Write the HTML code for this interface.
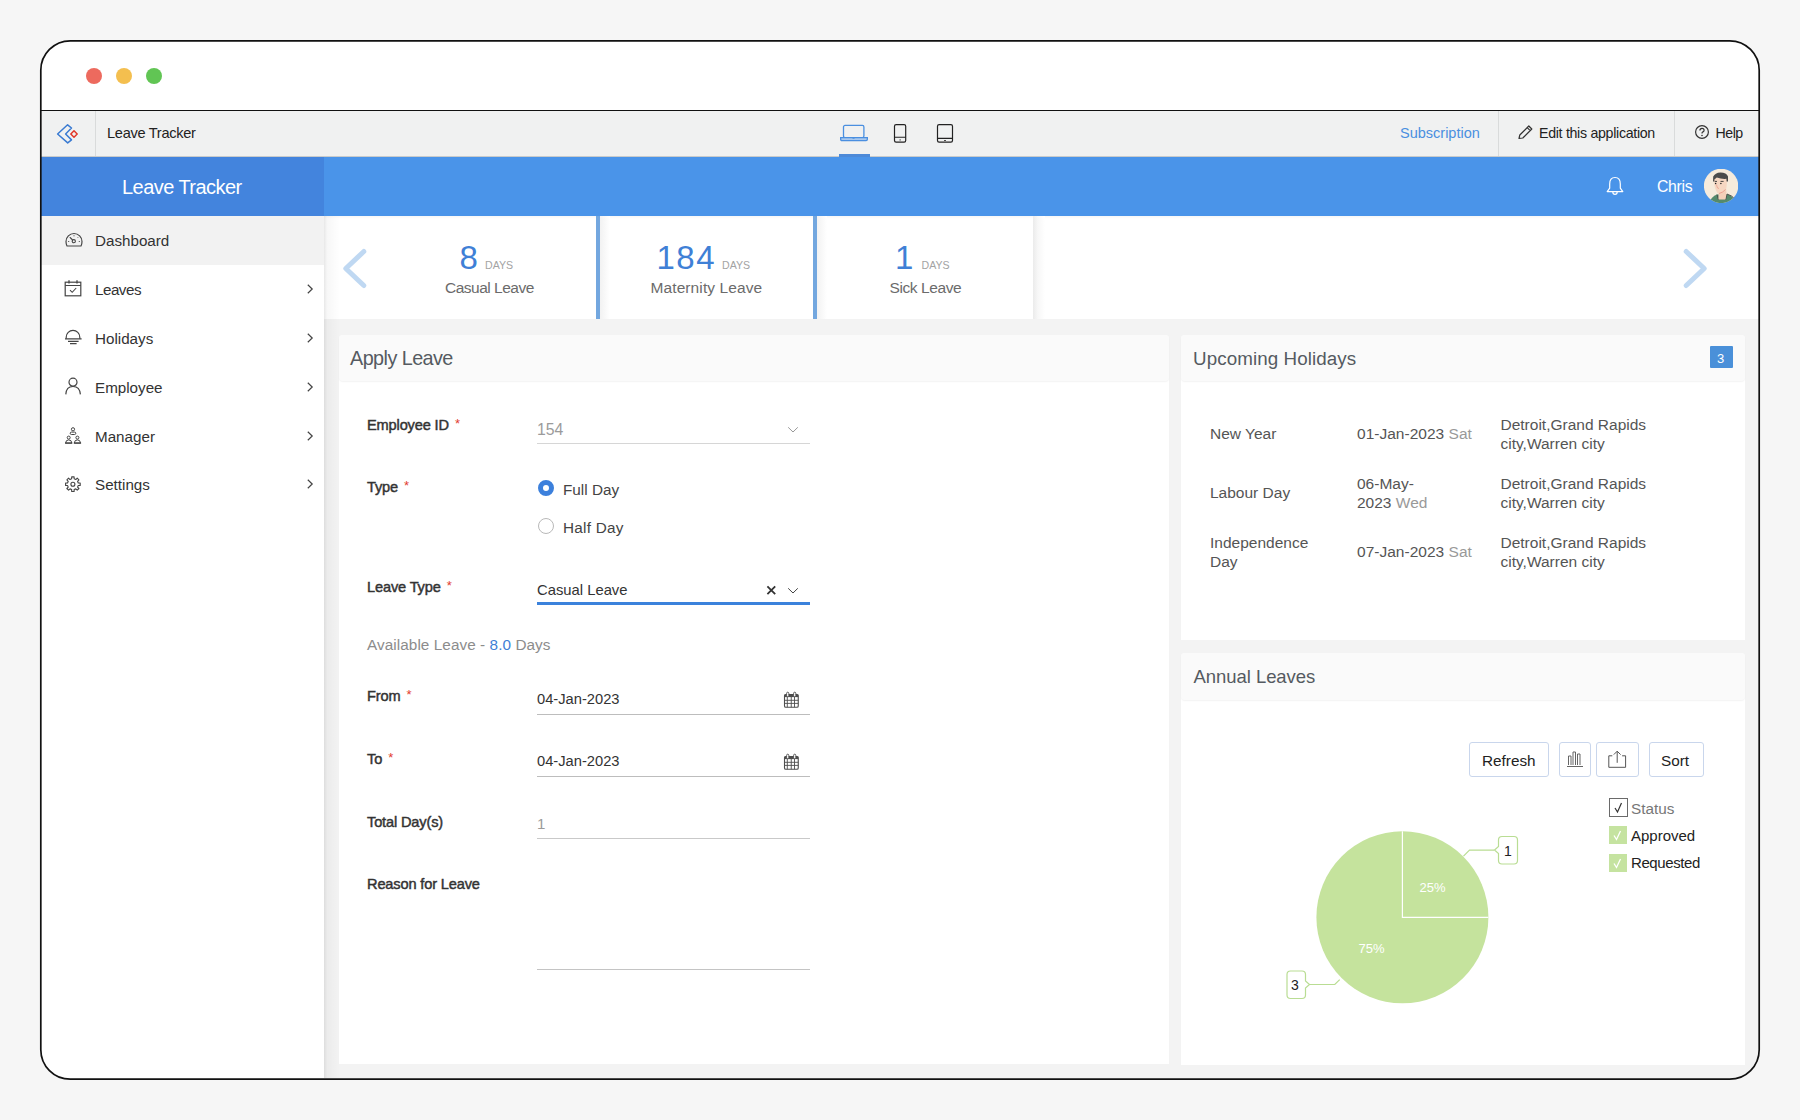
<!DOCTYPE html>
<html><head><meta charset="utf-8">
<style>
*{box-sizing:border-box;margin:0;padding:0}
html,body{width:1800px;height:1120px;overflow:hidden;background:#f6f6f6;font-family:"Liberation Sans",sans-serif;}
.abs{position:absolute}
.t{position:absolute;white-space:nowrap;line-height:1}
#clip{position:absolute;left:0;top:0;width:1800px;height:1120px;clip-path:inset(40px 40px 40px 40px round 30px);background:#fff}
#border{position:absolute;left:40px;top:40px;width:1720px;height:1040px;border:2px solid #111;border-radius:30px;pointer-events:none}
#tbline{position:absolute;left:40px;top:109.6px;width:1720px;height:1.6px;background:#111}
</style></head><body>
<div id="clip">
<div class="abs" style="left:86px;top:68px;width:16px;height:16px;border-radius:50%;background:#ed6a5e"></div>
<div class="abs" style="left:116px;top:68px;width:16px;height:16px;border-radius:50%;background:#f4bf4f"></div>
<div class="abs" style="left:146px;top:68px;width:16px;height:16px;border-radius:50%;background:#61c554"></div>
<div class="abs" style="left:41px;top:111px;width:1718px;height:46px;background:#f0f1f1"></div>
<div class="abs" style="left:95px;top:111px;width:1px;height:46px;background:#d9dbdb"></div>
<div class="abs" style="left:1498px;top:111px;width:1px;height:46px;background:#d9dbdb"></div>
<div class="abs" style="left:1674px;top:111px;width:1px;height:46px;background:#d9dbdb"></div>
<svg class="abs" style="left:56px;top:123px;" width="24" height="22" viewBox="0 0 24 22"><path d="M11.6 1.8 L1.6 11 L11.7 19.9 L15.5 16.9 L9.6 11 L15.5 5 Z" fill="none" stroke="#3a7bd2" stroke-width="1.5" stroke-linejoin="round"/><path d="M18 7.8 L21.2 11 L18 14.2 L14.8 11 Z" fill="none" stroke="#e2382a" stroke-width="1.5" stroke-linejoin="round"/></svg>
<div class="t" style="left:107px;top:125.94px;font-size:14.6px;color:#222;font-weight:400;letter-spacing:-0.3px;">Leave Tracker</div>
<svg class="abs" style="left:839px;top:123px;" width="32" height="20" viewBox="0 0 32 20"><rect x="4.5" y="2.45" width="20.4" height="12.1" rx="1.5" fill="none" stroke="#4a8fe0" stroke-width="1.3"/><path d="M1.65 14.55 H28.35 V16.3 Q28.35 17.55 27.1 17.55 H2.9 Q1.65 17.55 1.65 16.3 Z" fill="#a9c8ee" stroke="#4a8fe0" stroke-width="1.3"/><path d="M13.5 15.2 H15.5" stroke="#4a8fe0" stroke-width="1"/></svg>
<div class="abs" style="left:839px;top:154px;width:31px;height:3px;background:#4d8ad8"></div>
<svg class="abs" style="left:892px;top:122px;" width="16" height="22" viewBox="0 0 16 22"><rect x="2.5" y="2.6" width="11.2" height="17.6" rx="1.6" fill="none" stroke="#222" stroke-width="1.2"/><path d="M2.5 15.3 H13.7" stroke="#222" stroke-width="1.1"/><circle cx="8.1" cy="17.9" r="0.6" fill="#222"/></svg>
<svg class="abs" style="left:936px;top:122px;" width="18" height="22" viewBox="0 0 18 22"><rect x="1.5" y="2.6" width="15" height="17.6" rx="1.6" fill="none" stroke="#222" stroke-width="1.2"/><path d="M1.5 16.4 H16.5" stroke="#222" stroke-width="1.1"/><rect x="8" y="18.2" width="2" height="0.8" fill="#222"/></svg>
<div class="t" style="left:1400px;top:126.03px;font-size:14.5px;color:#4a8fe0;font-weight:400;">Subscription</div>
<svg class="abs" style="left:1516px;top:124px;" width="18" height="16" viewBox="0 0 18 16"><path d="M3 14.5 L3.8 11 L12.8 2 L15.8 5 L6.8 14 Z M11.2 3.6 L14.2 6.6" fill="none" stroke="#333" stroke-width="1.2" stroke-linejoin="round"/></svg>
<div class="t" style="left:1539px;top:126.28px;font-size:14.2px;color:#222;font-weight:400;letter-spacing:-0.3px;">Edit this application</div>
<svg class="abs" style="left:1694px;top:124px;" width="16" height="16" viewBox="0 0 16 16"><circle cx="8" cy="8" r="6.4" fill="none" stroke="#333" stroke-width="1.2"/><path d="M5.9 6.4 Q5.9 4.3 8 4.3 Q10.1 4.3 10.1 6.2 Q10.1 7.4 8.6 8.1 Q8 8.5 8 9.5" fill="none" stroke="#333" stroke-width="1.2"/><circle cx="8" cy="11.5" r="0.8" fill="#333"/></svg>
<div class="t" style="left:1715.5px;top:126.28px;font-size:14.2px;color:#222;font-weight:400;letter-spacing:-0.5px;">Help</div>
<div class="abs" style="left:41px;top:157px;width:1718px;height:59px;background:#4a94e9"></div>
<div class="abs" style="left:41px;top:157px;width:283px;height:59px;background:#4384dd"></div>
<div class="abs" style="left:41px;top:156px;width:1718px;height:1px;background:#c9cbcb"></div>
<div class="abs" style="left:839px;top:154px;width:31px;height:2.6px;background:#4d8ad8"></div>
<div class="t" style="left:122px;top:177.27px;font-size:20px;color:#fff;font-weight:400;letter-spacing:-0.55px;">Leave Tracker</div>
<svg class="abs" style="left:1605px;top:175px;" width="20" height="21" viewBox="0 0 20 21"><path d="M10 2.5 Q15.3 2.5 15.3 9 V13.2 L17.8 16.6 H2.2 L4.7 13.2 V9 Q4.7 2.5 10 2.5 Z" fill="none" stroke="#fff" stroke-width="1.2" stroke-linejoin="round"/><path d="M7.8 16.8 Q7.8 19.4 10 19.4 Q12.2 19.4 12.2 16.8" fill="none" stroke="#fff" stroke-width="1.2"/></svg>
<div class="t" style="left:1657px;top:178.83px;font-size:15.8px;color:#fff;font-weight:400;letter-spacing:-0.3px;">Chris</div>
<svg class="abs" style="left:1704px;top:169px;" width="34" height="34" viewBox="0 0 34 34"><defs><clipPath id="av"><circle cx="17.1" cy="16.9" r="17.2"/></clipPath></defs><circle cx="17.1" cy="16.9" r="17.2" fill="#f6ebdc"/><g clip-path="url(#av)"><path d="M4 37 Q6 28 13 25.5 L23 25 Q29 27 32 33 L32 37 Z" fill="#548a6c"/><path d="M13 25.5 L14.5 31 M23 25 L21.5 31 M23 25 Q28 26.5 31 30" fill="none" stroke="#4a4a4a" stroke-width="0.9"/><path d="M14.5 21 L14.5 30.5 L21.5 30.5 L22.5 25 L22 18 Z" fill="#f3cfb8"/><path d="M10 11 Q10 8.8 13 8.6 L21 8.6 Q23.2 9 23 12.5 L22.5 18.5 Q22 21.3 19.5 22.8 L15.5 24.8 Q12.8 24.3 12 21.5 L10.5 17 Z" fill="#f6d7c2"/><path d="M15 24.5 Q19 23.5 21.5 20.5" fill="none" stroke="#e89a8a" stroke-width="0.9"/><path d="M9 12.6 L9.2 7.6 Q11 3.6 16.5 3.4 Q22.5 3.4 24 7.5 L24 12.6 L22.6 12.6 L22.4 9.8 Q17.5 10.2 12.8 8.6 L10.4 10.4 L10.4 12.6 Z" fill="#4b4b4b"/><path d="M10.8 12.4 H13 M16.5 12.4 H19.6" stroke="#333" stroke-width="0.9"/><circle cx="11.6" cy="14.6" r="0.75" fill="#222"/><circle cx="16.9" cy="14.6" r="0.75" fill="#222"/><path d="M12.4 15.5 L13.5 19 L15 19.5" fill="none" stroke="#eaa08e" stroke-width="0.8"/></g></svg>
<div class="abs" style="left:41px;top:216px;width:283px;height:49px;background:#f2f2f2"></div>
<div class="t" style="left:95px;top:232.93px;font-size:15.2px;color:#333;font-weight:400;">Dashboard</div>
<div class="t" style="left:95px;top:282.13px;font-size:15.2px;color:#333;font-weight:400;letter-spacing:-0.5px;">Leaves</div>
<svg class="abs" style="left:305px;top:283px;" width="10" height="12" viewBox="0 0 10 12"><path d="M2.8 1.8 L7.2 6 L2.8 10.2" fill="none" stroke="#444" stroke-width="1.2"/></svg>
<div class="t" style="left:95px;top:331.13px;font-size:15.2px;color:#333;font-weight:400;">Holidays</div>
<svg class="abs" style="left:305px;top:332px;" width="10" height="12" viewBox="0 0 10 12"><path d="M2.8 1.8 L7.2 6 L2.8 10.2" fill="none" stroke="#444" stroke-width="1.2"/></svg>
<div class="t" style="left:95px;top:379.93px;font-size:15.2px;color:#333;font-weight:400;">Employee</div>
<svg class="abs" style="left:305px;top:380.8px;" width="10" height="12" viewBox="0 0 10 12"><path d="M2.8 1.8 L7.2 6 L2.8 10.2" fill="none" stroke="#444" stroke-width="1.2"/></svg>
<div class="t" style="left:95px;top:428.63px;font-size:15.2px;color:#333;font-weight:400;">Manager</div>
<svg class="abs" style="left:305px;top:429.5px;" width="10" height="12" viewBox="0 0 10 12"><path d="M2.8 1.8 L7.2 6 L2.8 10.2" fill="none" stroke="#444" stroke-width="1.2"/></svg>
<div class="t" style="left:95px;top:477.33px;font-size:15.2px;color:#333;font-weight:400;">Settings</div>
<svg class="abs" style="left:305px;top:478.2px;" width="10" height="12" viewBox="0 0 10 12"><path d="M2.8 1.8 L7.2 6 L2.8 10.2" fill="none" stroke="#444" stroke-width="1.2"/></svg>
<svg class="abs" style="left:64.5px;top:231.5px;" width="18" height="16" viewBox="0 0 18 16"><path d="M2 14 Q1 12 1 9.5 A8 8 0 0 1 17 9.5 Q17 12 16 14 Z" fill="none" stroke="#444" stroke-width="1.2" stroke-linejoin="round"/><circle cx="8.8" cy="9.2" r="1.6" fill="none" stroke="#444" stroke-width="1.1"/><path d="M7.6 8 L5 5.3" stroke="#444" stroke-width="1.1"/><path d="M3.2 9.5 H4.2 M13.8 9.5 H14.8 M9 3.3 V4.3 M4.6 5 L5.2 5.6 M13.4 5 L12.8 5.6" stroke="#444" stroke-width="1"/></svg>
<svg class="abs" style="left:64px;top:279px;" width="18" height="18" viewBox="0 0 18 18"><rect x="1.2" y="3.2" width="15.6" height="13.6" fill="none" stroke="#444" stroke-width="1.2"/><path d="M1.2 6.5 H16.8" stroke="#444" stroke-width="1"/><path d="M5 1.2 V4.5 M13 1.2 V4.5" stroke="#444" stroke-width="1.3"/><path d="M6 11.2 L8.2 13.3 L12.2 9" fill="none" stroke="#444" stroke-width="1.1"/></svg>
<svg class="abs" style="left:64px;top:329px;" width="19" height="17" viewBox="0 0 19 17"><path d="M2.2 9.7 V8.2 A6.8 6.8 0 0 1 15.8 8.2 V9.7" fill="none" stroke="#444" stroke-width="1.2"/><path d="M1 9.8 H17.6 M4 12.4 H14.6 M6 14.6 H12.6" stroke="#444" stroke-width="1.3"/></svg>
<svg class="abs" style="left:64px;top:376px;" width="18" height="20" viewBox="0 0 18 20"><circle cx="9" cy="6.2" r="4" fill="none" stroke="#444" stroke-width="1.2"/><path d="M1.8 18.4 Q2.2 10.5 9 10.5 Q15.8 10.5 16.4 18.4" fill="none" stroke="#444" stroke-width="1.2"/></svg>
<svg class="abs" style="left:64px;top:425px;" width="18" height="20" viewBox="0 0 18 20"><circle cx="9" cy="4.3" r="1.6" fill="none" stroke="#444" stroke-width="1"/><rect x="6.2" y="7.1" width="5.6" height="2.4" rx="1.2" fill="none" stroke="#444" stroke-width="1"/><circle cx="4.7" cy="12.6" r="1.5" fill="none" stroke="#444" stroke-width="1"/><circle cx="13.4" cy="12.6" r="1.5" fill="none" stroke="#444" stroke-width="1"/><path d="M1.6 18 Q1.8 14.9 4.7 14.9 Q7.6 14.9 7.8 18 Z M10.3 18 Q10.5 14.9 13.4 14.9 Q16.3 14.9 16.5 18 Z" fill="none" stroke="#444" stroke-width="1"/><path d="M1 18.2 H8.3 M9.8 18.2 H17.1" stroke="#444" stroke-width="1.3"/></svg>
<svg class="abs" style="left:63px;top:475px;" width="20" height="19" viewBox="0 0 20 19"><path d="M15.26 7.96 L17.20 7.99 L17.20 10.41 L15.26 10.44 L14.57 12.11 L15.92 13.50 L14.20 15.22 L12.81 13.87 L11.14 14.56 L11.11 16.50 L8.69 16.50 L8.66 14.56 L6.99 13.87 L5.60 15.22 L3.88 13.50 L5.23 12.11 L4.54 10.44 L2.60 10.41 L2.60 7.99 L4.54 7.96 L5.23 6.29 L3.88 4.90 L5.60 3.18 L6.99 4.53 L8.66 3.84 L8.69 1.90 L11.11 1.90 L11.14 3.84 L12.81 4.53 L14.20 3.18 L15.92 4.90 L14.57 6.29 Z" fill="none" stroke="#444" stroke-width="1.1" stroke-linejoin="round"/><circle cx="9.9" cy="9.2" r="2" fill="none" stroke="#444" stroke-width="1.1"/></svg>
<div class="abs" style="left:324px;top:216px;width:1435px;height:862px;background:#f3f3f3"></div>
<div class="abs" style="left:330px;top:216px;width:1429px;height:103px;background:#fff"></div>
<div class="abs" style="left:324px;top:216px;width:1435px;height:103px;background:#fff"></div>
<div class="abs" style="left:324px;top:216px;width:1435px;height:3px;background:linear-gradient(to bottom,rgba(0,0,0,0.035),rgba(0,0,0,0))"></div>
<div class="abs" style="left:324px;top:216px;width:16px;height:862px;background:linear-gradient(to right,rgba(0,0,0,0.09),rgba(0,0,0,0.03) 20%,rgba(0,0,0,0))"></div>
<svg class="abs" style="left:340px;top:246px;" width="30" height="46" viewBox="0 0 30 46"><path d="M23.8 5.5 L5.8 22.5 L23.8 39.5" fill="none" stroke="#bfd8f2" stroke-width="5" stroke-linecap="round" stroke-linejoin="round"/></svg>
<svg class="abs" style="left:1680px;top:246px;" width="30" height="46" viewBox="0 0 30 46"><path d="M6.2 5.5 L24.2 22.5 L6.2 39.5" fill="none" stroke="#bfd8f2" stroke-width="5" stroke-linecap="round" stroke-linejoin="round"/></svg>
<div class="abs" style="left:596px;top:216px;width:4px;height:103px;background:#73a7df"></div>
<div class="abs" style="left:600px;top:216px;width:10px;height:103px;background:linear-gradient(to right,#f2f2f2,#fff)"></div>
<div class="abs" style="left:813px;top:216px;width:4px;height:103px;background:#73a7df"></div>
<div class="abs" style="left:817px;top:216px;width:10px;height:103px;background:linear-gradient(to right,#f2f2f2,#fff)"></div>
<div class="abs" style="left:1033px;top:216px;width:12px;height:103px;background:linear-gradient(to right,#ebebeb,#f7f7f7 40%,#fff)"></div>
<div class="t" style="left:459.5px;top:240.87px;font-size:33px;color:#3f80d6;font-weight:400;">8</div>
<div class="t" style="left:485px;top:260.03px;font-size:10.6px;color:#a3a3a3;font-weight:400;">DAYS</div>
<div class="t" style="left:445px;top:279.68px;font-size:15.5px;color:#6b6b6b;font-weight:400;letter-spacing:-0.5px;">Casual Leave</div>
<div class="t" style="left:656.5px;top:240.87px;font-size:33px;color:#3f80d6;font-weight:400;letter-spacing:1.5px;">184</div>
<div class="t" style="left:722px;top:260.03px;font-size:10.6px;color:#a3a3a3;font-weight:400;">DAYS</div>
<div class="t" style="left:650.5px;top:279.68px;font-size:15.5px;color:#6b6b6b;font-weight:400;letter-spacing:0.1px;">Maternity Leave</div>
<div class="t" style="left:895px;top:240.87px;font-size:33px;color:#3f80d6;font-weight:400;">1</div>
<div class="t" style="left:921.5px;top:260.03px;font-size:10.6px;color:#a3a3a3;font-weight:400;">DAYS</div>
<div class="t" style="left:889.5px;top:279.68px;font-size:15.5px;color:#6b6b6b;font-weight:400;letter-spacing:-0.4px;">Sick Leave</div>
<div class="abs" style="left:339px;top:335px;width:830px;height:729px;background:#fff;border-radius:4px 4px 0 0"></div>
<div class="abs" style="left:339px;top:335px;width:830px;height:46px;background:#fafafa;border-radius:4px;box-shadow:0 1px 1.5px rgba(0,0,0,0.05)"></div>
<div class="t" style="left:350px;top:349.34px;font-size:19.8px;color:#555a61;font-weight:400;letter-spacing:-0.55px;">Apply Leave</div>
<div class="t" style="left:367px;top:418.24px;font-size:14.6px;color:#333;font-weight:400;letter-spacing:-0.15px;-webkit-text-stroke:0.45px #333;">Employee ID<span style="color:#e23b2e;font-size:13px;position:relative;top:-2px;margin-left:6px;-webkit-text-stroke:0">*</span></div>
<div class="t" style="left:537px;top:421.63px;font-size:15.8px;color:#9b9b9b;font-weight:400;">154</div>
<svg class="abs" style="left:786px;top:425px;" width="14" height="10" viewBox="0 0 14 10"><path d="M2.2 2.3 L7 7 L11.8 2.3" fill="none" stroke="#999" stroke-width="1"/></svg>
<div class="abs" style="left:537px;top:443px;width:273px;height:1px;background:#d6d6d6"></div>
<div class="t" style="left:367px;top:480.14px;font-size:14.6px;color:#333;font-weight:400;letter-spacing:-0.15px;-webkit-text-stroke:0.45px #333;">Type<span style="color:#e23b2e;font-size:13px;position:relative;top:-2px;margin-left:6px;-webkit-text-stroke:0">*</span></div>
<div class="abs" style="left:538px;top:480px;width:16px;height:16px;border-radius:50%;border:5px solid #3c80dc;background:#fff"></div>
<div class="t" style="left:563px;top:481.65px;font-size:15.3px;color:#444;font-weight:400;">Full Day</div>
<div class="abs" style="left:538px;top:518px;width:16px;height:16px;border-radius:50%;border:1.3px solid #b9b9b9;background:#fff"></div>
<div class="t" style="left:563px;top:520.45px;font-size:15.3px;color:#444;font-weight:400;letter-spacing:0.25px;">Half Day</div>
<div class="t" style="left:367px;top:579.64px;font-size:14.6px;color:#333;font-weight:400;letter-spacing:-0.15px;-webkit-text-stroke:0.45px #333;">Leave Type<span style="color:#e23b2e;font-size:13px;position:relative;top:-2px;margin-left:6px;-webkit-text-stroke:0">*</span></div>
<div class="t" style="left:537px;top:582.77px;font-size:14.8px;color:#333;font-weight:400;">Casual Leave</div>
<svg class="abs" style="left:765px;top:584px;" width="12" height="12" viewBox="0 0 12 12"><path d="M2.4 2.4 L10.2 10.2 M10.2 2.4 L2.4 10.2" stroke="#333" stroke-width="1.8"/></svg>
<svg class="abs" style="left:786px;top:586px;" width="14" height="10" viewBox="0 0 14 10"><path d="M2.2 2.3 L7 7 L11.8 2.3" fill="none" stroke="#444" stroke-width="1"/></svg>
<div class="abs" style="left:537px;top:602px;width:273px;height:3px;background:#3b82dc"></div>
<div class="t" style="left:367px;top:636.55px;font-size:15.3px;color:#8c8c8c;font-weight:400;letter-spacing:0.07px;">Available Leave - <span style="color:#3f80d6">8.0</span> Days</div>
<div class="t" style="left:367px;top:689.44px;font-size:14.6px;color:#333;font-weight:400;letter-spacing:-0.15px;-webkit-text-stroke:0.45px #333;">From<span style="color:#e23b2e;font-size:13px;position:relative;top:-2px;margin-left:6px;-webkit-text-stroke:0">*</span></div>
<div class="t" style="left:537px;top:692.06px;font-size:14.7px;color:#333;font-weight:400;">04-Jan-2023</div>
<svg class="abs" style="left:783px;top:691px;" width="16" height="17" viewBox="0 0 16 17"><rect x="1.5" y="3.5" width="13.75" height="12.7" rx="1.3" fill="none" stroke="#4d4d4d" stroke-width="1.1"/><rect x="1.5" y="3.5" width="13.75" height="2.6" fill="#4d4d4d"/><path d="M4.3 6 V16.2 M8.25 6 V16.2 M11.5 6 V16.2 M1.5 9.3 H15.25 M1.5 12.4 H15.25" stroke="#4d4d4d" stroke-width="0.9"/><rect x="3.6" y="1.2" width="2.2" height="4.6" rx="1.1" fill="#fff" stroke="#4d4d4d" stroke-width="0.9"/><rect x="10.6" y="1.2" width="2.2" height="4.6" rx="1.1" fill="#fff" stroke="#4d4d4d" stroke-width="0.9"/></svg>
<div class="abs" style="left:537px;top:714px;width:273px;height:1px;background:#bdbdbd"></div>
<div class="t" style="left:367px;top:751.84px;font-size:14.6px;color:#333;font-weight:400;letter-spacing:-0.15px;-webkit-text-stroke:0.45px #333;">To<span style="color:#e23b2e;font-size:13px;position:relative;top:-2px;margin-left:6px;-webkit-text-stroke:0">*</span></div>
<div class="t" style="left:537px;top:753.86px;font-size:14.7px;color:#333;font-weight:400;">04-Jan-2023</div>
<svg class="abs" style="left:783px;top:753px;" width="16" height="17" viewBox="0 0 16 17"><rect x="1.5" y="3.5" width="13.75" height="12.7" rx="1.3" fill="none" stroke="#4d4d4d" stroke-width="1.1"/><rect x="1.5" y="3.5" width="13.75" height="2.6" fill="#4d4d4d"/><path d="M4.3 6 V16.2 M8.25 6 V16.2 M11.5 6 V16.2 M1.5 9.3 H15.25 M1.5 12.4 H15.25" stroke="#4d4d4d" stroke-width="0.9"/><rect x="3.6" y="1.2" width="2.2" height="4.6" rx="1.1" fill="#fff" stroke="#4d4d4d" stroke-width="0.9"/><rect x="10.6" y="1.2" width="2.2" height="4.6" rx="1.1" fill="#fff" stroke="#4d4d4d" stroke-width="0.9"/></svg>
<div class="abs" style="left:537px;top:776px;width:273px;height:1px;background:#bdbdbd"></div>
<div class="t" style="left:367px;top:814.54px;font-size:14.6px;color:#333;font-weight:400;letter-spacing:-0.15px;-webkit-text-stroke:0.45px #333;">Total Day(s)</div>
<div class="t" style="left:537px;top:816.30px;font-size:15px;color:#9b9b9b;font-weight:400;">1</div>
<div class="abs" style="left:537px;top:838px;width:273px;height:1px;background:#c9c9c9"></div>
<div class="t" style="left:367px;top:876.64px;font-size:14.6px;color:#333;font-weight:400;letter-spacing:-0.15px;-webkit-text-stroke:0.45px #333;">Reason for Leave</div>
<div class="abs" style="left:537px;top:969px;width:273px;height:1px;background:#c4c4c4"></div>
<div class="abs" style="left:1181px;top:335px;width:564px;height:305px;background:#fff;border-radius:4px 4px 0 0"></div>
<div class="abs" style="left:1181px;top:335px;width:564px;height:46px;background:#fafafa;border-radius:4px;box-shadow:0 1px 1.5px rgba(0,0,0,0.05)"></div>
<div class="t" style="left:1193px;top:349.69px;font-size:18.8px;color:#555a61;font-weight:400;letter-spacing:0.08px;">Upcoming Holidays</div>
<div class="abs" style="left:1710px;top:346px;width:23px;height:22px;background:#4a90d9;border-radius:1px"></div>
<div class="t" style="left:1717px;top:351.50px;font-size:13px;color:#fff;font-weight:400;">3</div>
<div class="t" style="left:1210px;top:425.98px;font-size:15.5px;color:#555;font-weight:400;">New Year</div>
<div class="t" style="left:1357px;top:425.98px;font-size:15.5px;color:#555;font-weight:400;letter-spacing:0.02px;">01-Jan-2023<span style="color:#999"> Sat</span></div>
<div class="t" style="left:1500.5px;top:416.68px;font-size:15.5px;color:#555;font-weight:400;">Detroit,Grand Rapids</div>
<div class="t" style="left:1500.5px;top:435.98px;font-size:15.5px;color:#555;font-weight:400;">city,Warren city</div>
<div class="t" style="left:1210px;top:485.28px;font-size:15.5px;color:#555;font-weight:400;">Labour Day</div>
<div class="t" style="left:1357px;top:475.88px;font-size:15.5px;color:#555;font-weight:400;">06-May-</div>
<div class="t" style="left:1357px;top:495.08px;font-size:15.5px;color:#555;font-weight:400;">2023<span style="color:#999"> Wed</span></div>
<div class="t" style="left:1500.5px;top:475.98px;font-size:15.5px;color:#555;font-weight:400;">Detroit,Grand Rapids</div>
<div class="t" style="left:1500.5px;top:495.28px;font-size:15.5px;color:#555;font-weight:400;">city,Warren city</div>
<div class="t" style="left:1210px;top:534.68px;font-size:15.5px;color:#555;font-weight:400;">Independence</div>
<div class="t" style="left:1210px;top:554.08px;font-size:15.5px;color:#555;font-weight:400;">Day</div>
<div class="t" style="left:1357px;top:544.38px;font-size:15.5px;color:#555;font-weight:400;letter-spacing:0.02px;">07-Jan-2023<span style="color:#999"> Sat</span></div>
<div class="t" style="left:1500.5px;top:535.08px;font-size:15.5px;color:#555;font-weight:400;">Detroit,Grand Rapids</div>
<div class="t" style="left:1500.5px;top:554.38px;font-size:15.5px;color:#555;font-weight:400;">city,Warren city</div>
<div class="abs" style="left:1181px;top:653px;width:564px;height:412px;background:#fff;border-radius:4px 4px 0 0"></div>
<div class="abs" style="left:1181px;top:653px;width:564px;height:47px;background:#fafafa;border-radius:4px;box-shadow:0 1px 1.5px rgba(0,0,0,0.05)"></div>
<div class="t" style="left:1193.5px;top:667.74px;font-size:18.5px;color:#555a61;font-weight:400;letter-spacing:-0.05px;">Annual Leaves</div>
<div class="abs" style="left:1469px;top:742px;width:80px;height:35px;border:1px solid #c9d6ec;border-radius:3px;background:#fff"></div>
<div class="t" style="left:1482px;top:752.55px;font-size:15.3px;color:#222;font-weight:400;">Refresh</div>
<div class="abs" style="left:1559px;top:742px;width:32px;height:35px;border:1px solid #c9d6ec;border-radius:3px;background:#fff"></div>
<svg class="abs" style="left:1565px;top:748px;" width="20" height="22" viewBox="0 0 20 22"><path d="M2 18.5 H18 M3.5 17 V8 H6 V17 M8 17 V4 H10.5 V17 M12.5 17 V6 H15 V17" fill="none" stroke="#666" stroke-width="1"/></svg>
<div class="abs" style="left:1596px;top:742px;width:43px;height:35px;border:1px solid #c9d6ec;border-radius:3px;background:#fff"></div>
<svg class="abs" style="left:1607px;top:748px;" width="22" height="22" viewBox="0 0 22 22"><path d="M5.3 7.8 H1.8 V19.3 H18.6 V7.8 H15.1 M10.2 14.8 V3.2 M6.8 6.6 L10.2 3.2 L13.6 6.6" fill="none" stroke="#555" stroke-width="1"/></svg>
<div class="abs" style="left:1649px;top:742px;width:55px;height:35px;border:1px solid #c9d6ec;border-radius:3px;background:#fff"></div>
<div class="t" style="left:1661px;top:752.55px;font-size:15.3px;color:#222;font-weight:400;">Sort</div>
<div class="abs" style="left:1609px;top:798px;width:19px;height:19px;border:1.5px solid #6a6a6a;background:#fff"></div>
<svg class="abs" style="left:1610px;top:799px;" width="17" height="17" viewBox="0 0 17 17"><path d="M5 9 L7.5 13 L11.5 4" fill="none" stroke="#333" stroke-width="1.2"/></svg>
<div class="t" style="left:1631px;top:800.65px;font-size:15.3px;color:#777;font-weight:400;">Status</div>
<div class="abs" style="left:1609px;top:826px;width:18px;height:18px;background:#c5e3a0"></div>
<svg class="abs" style="left:1609px;top:826px;" width="18" height="18" viewBox="0 0 18 18"><path d="M5 9.5 L7.5 13.5 L11.5 5" fill="none" stroke="#fff" stroke-width="1.3"/></svg>
<div class="t" style="left:1631px;top:828.30px;font-size:15px;color:#222;font-weight:400;">Approved</div>
<div class="abs" style="left:1609px;top:854px;width:18px;height:18px;background:#c5e3a0"></div>
<svg class="abs" style="left:1609px;top:854px;" width="18" height="18" viewBox="0 0 18 18"><path d="M5 9.5 L7.5 13.5 L11.5 5" fill="none" stroke="#fff" stroke-width="1.3"/></svg>
<div class="t" style="left:1631px;top:855.30px;font-size:15px;color:#222;font-weight:400;letter-spacing:-0.4px;">Requested</div>
<svg class="abs" style="left:1280px;top:820px;" width="250" height="190" viewBox="0 0 250 190">
<circle cx="122.4" cy="97.3" r="86" fill="#c5e39d"/>
<path d="M122.4 11.3 V97.3 H208.4" fill="none" stroke="#fff" stroke-width="1.2"/>
<path d="M183.5 36.2 L189.5 30.2 H214" fill="none" stroke="#b9dd93" stroke-width="1.2"/>
<path d="M59.7 159.6 L54.8 164.5 H29" fill="none" stroke="#b9dd93" stroke-width="1.2"/>
<path d="M222 16.5 H234 Q237.5 16.5 237.5 20 V40.5 Q237.5 44 234 44 H222 Q218.5 44 218.5 40.5 V33.5 L214.5 30 L218.5 26.5 V20 Q218.5 16.5 222 16.5 Z" fill="#fff" stroke="#b9dd93" stroke-width="1.2"/>
<path d="M10.5 151 H22 Q25.5 151 25.5 154.5 V161 L29.5 164.5 L25.5 168 V175 Q25.5 178.5 22 178.5 H10.5 Q7 178.5 7 175 V154.5 Q7 151 10.5 151 Z" fill="#fff" stroke="#b9dd93" stroke-width="1.2"/>
</svg>
<div class="t" style="left:1504px;top:843.65px;font-size:14px;color:#222;font-weight:400;">1</div>
<div class="t" style="left:1291px;top:977.65px;font-size:14px;color:#222;font-weight:400;">3</div>
<div class="t" style="left:1419.5px;top:881.00px;font-size:13px;color:#fff;font-weight:400;">25%</div>
<div class="t" style="left:1358.5px;top:942.00px;font-size:13px;color:#fff;font-weight:400;">75%</div>
</div>
<div id="tbline"></div>
<svg style="position:absolute;left:0;top:0" width="1800" height="1120"><rect x="40.8" y="40.8" width="1718.4" height="1038.4" rx="29.5" fill="none" stroke="#111" stroke-width="1.7"/></svg>
</body></html>
